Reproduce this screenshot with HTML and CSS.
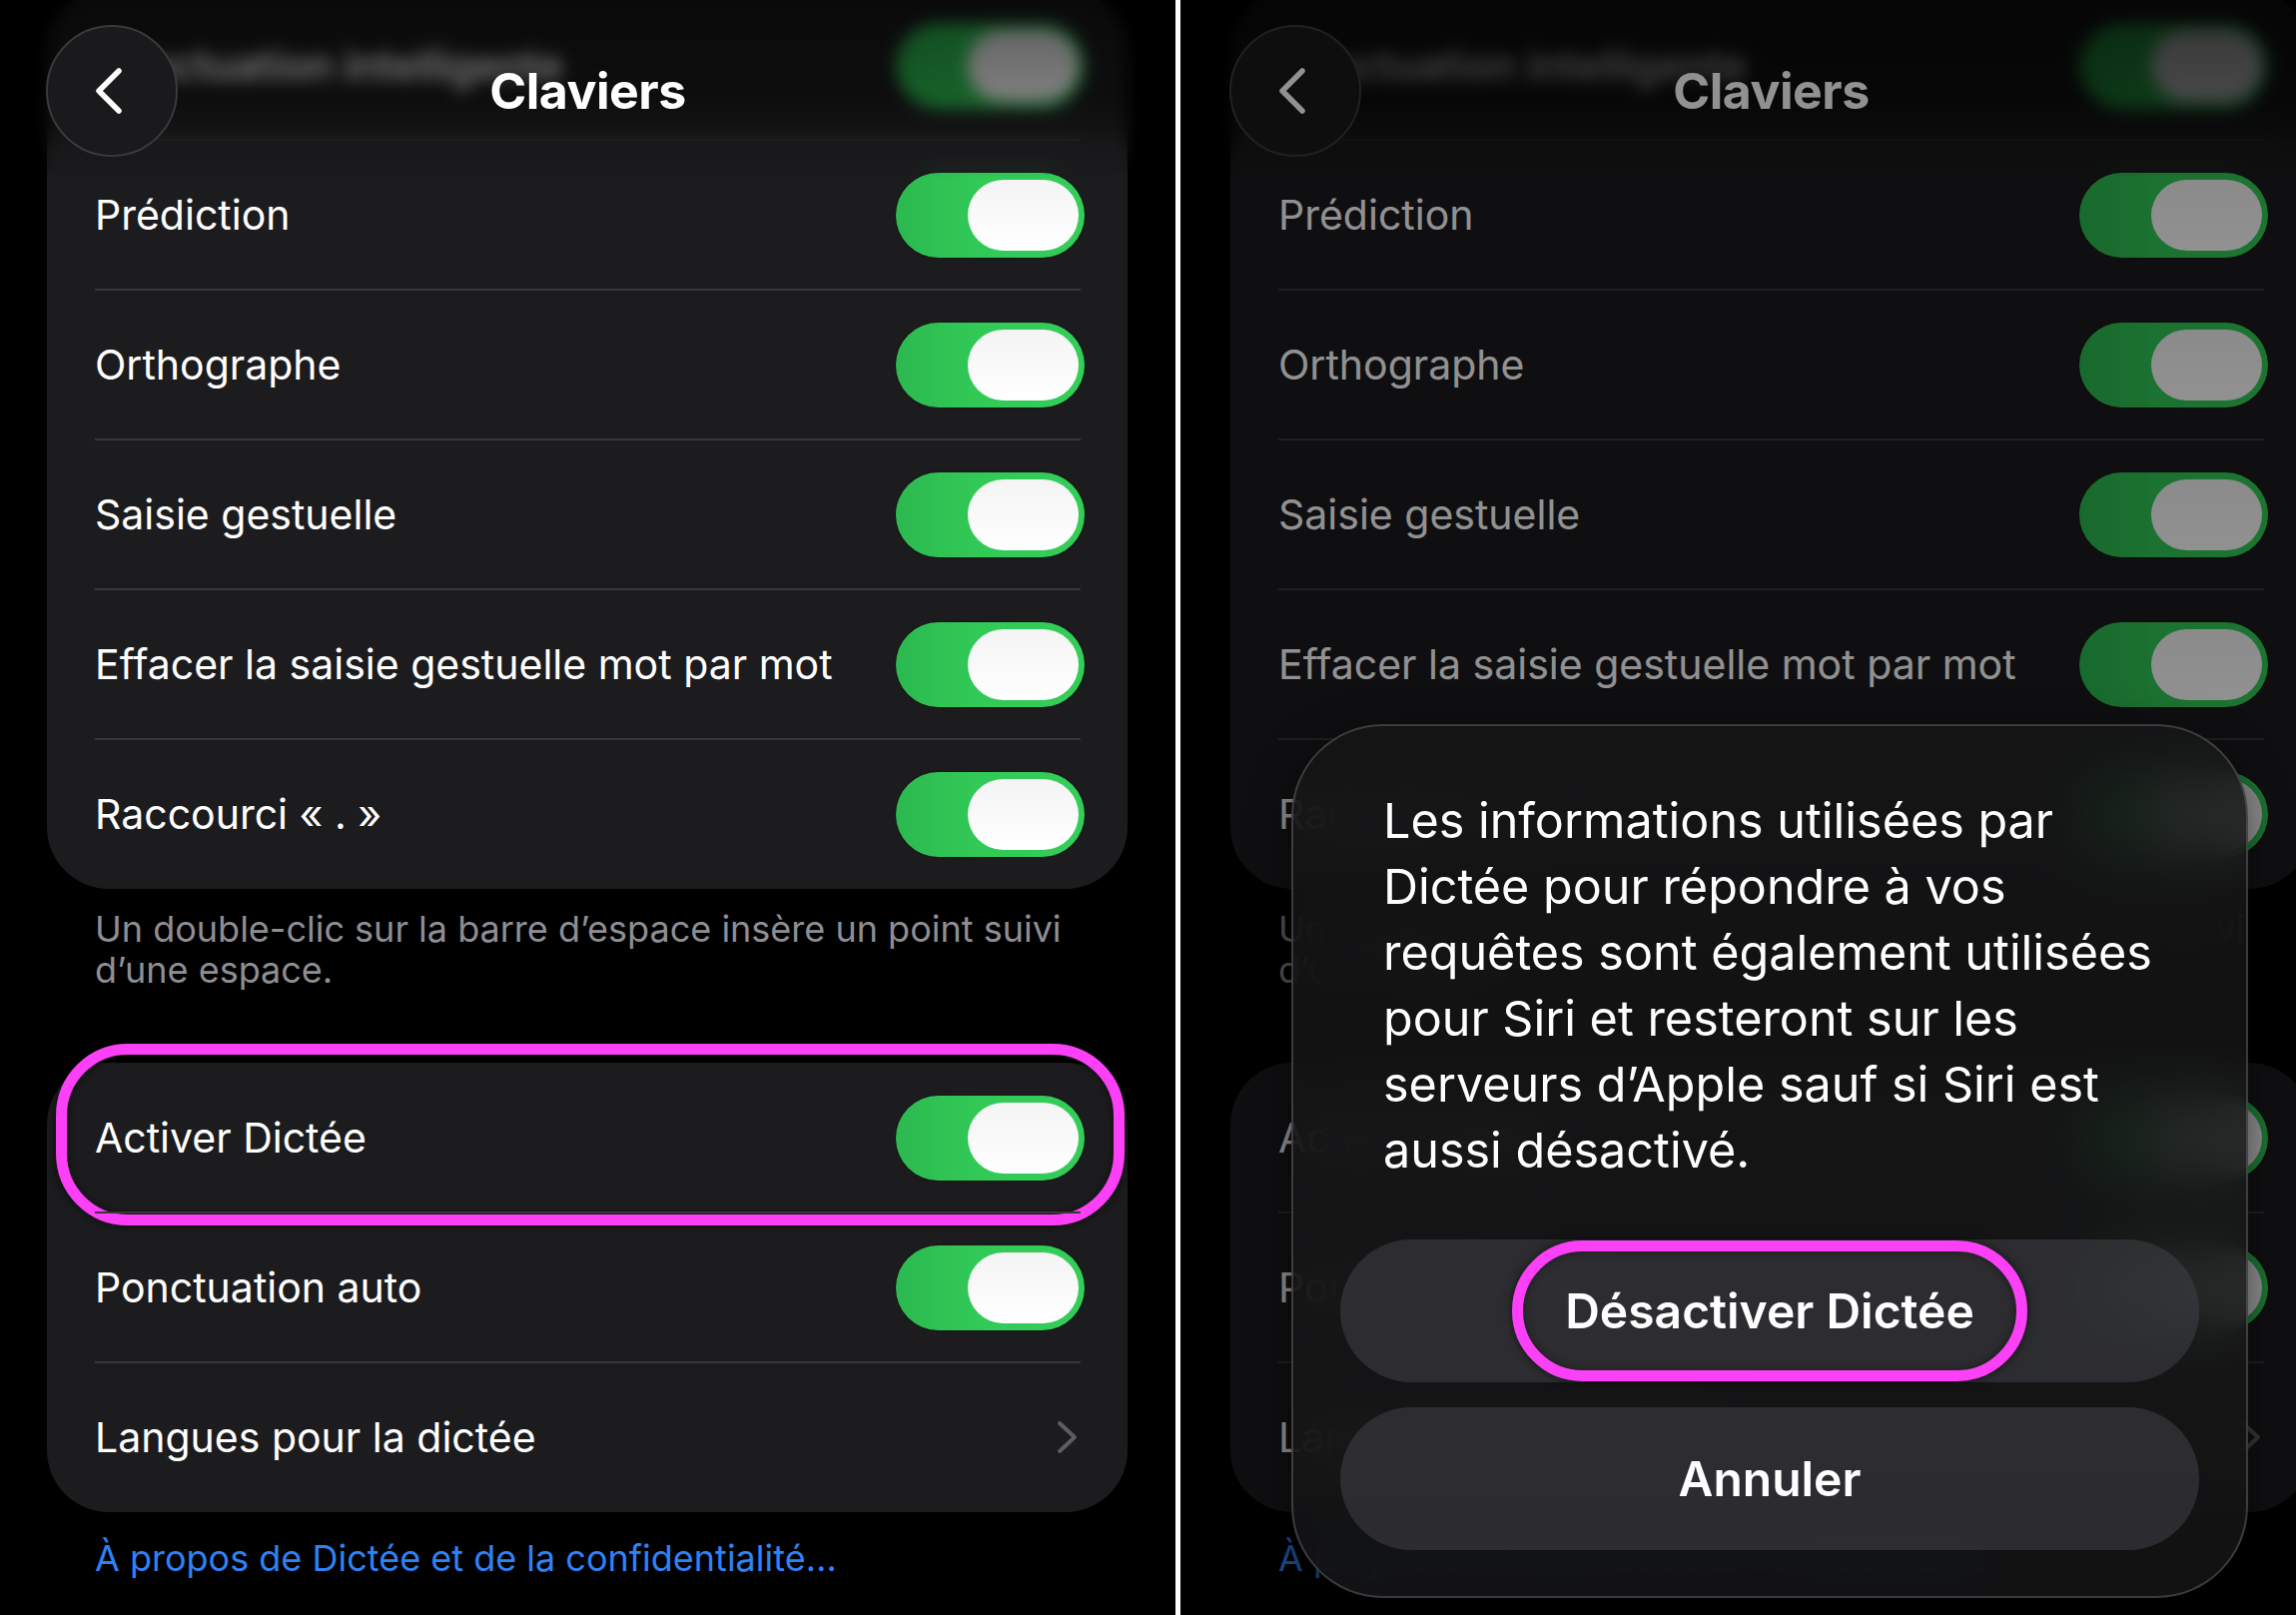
FILE: index.html
```html
<!DOCTYPE html>
<html lang="fr">
<head>
<meta charset="utf-8">
<title>Claviers – Dictée</title>
<link rel="stylesheet" href="styles.css">
</head>
<body>
<div class="stage">
  <section class="panel panel-left">
    <div class="screen">
      <div class="content">
        <div class="group group-top">
          <div class="row ghost"><span class="label">Ponctuation intelligente</span><span class="switch"><span class="knob"></span></span></div>
          <div class="row"><span class="label">Prédiction</span><span class="switch"><span class="knob"></span></span></div>
          <div class="row"><span class="label">Orthographe</span><span class="switch"><span class="knob"></span></span></div>
          <div class="row"><span class="label">Saisie gestuelle</span><span class="switch"><span class="knob"></span></span></div>
          <div class="row"><span class="label">Effacer la saisie gestuelle mot par mot</span><span class="switch"><span class="knob"></span></span></div>
          <div class="row"><span class="label">Raccourci « . »</span><span class="switch"><span class="knob"></span></span></div>
        </div>
        <p class="note">Un double-clic sur la barre d’espace insère un point suivi d’une espace.</p>
        <div class="group">
          <div class="row"><span class="label">Activer Dictée</span><span class="switch"><span class="knob"></span></span><span class="highlight"></span></div>
          <div class="row"><span class="label">Ponctuation auto</span><span class="switch"><span class="knob"></span></span></div>
          <div class="row"><span class="label">Langues pour la dictée</span><svg class="chevron" width="22" height="34" viewBox="0 0 22 34"><polyline points="3,3 18,17 3,31" fill="none" stroke="#5d5d62" stroke-width="4" stroke-linecap="round" stroke-linejoin="round"/></svg></div>
        </div>
        <a class="link" href="#">À propos de Dictée et de la confidentialité…</a>
      </div>
      <div class="edge"></div>
      <header class="nav">
        <span class="back"><svg width="30" height="48" viewBox="0 0 30 48"><polyline points="25,4 5,24 25,44" fill="none" stroke="#fff" stroke-width="5.5" stroke-linecap="round" stroke-linejoin="round"/></svg></span>
        <h1 class="title">Claviers</h1>
      </header>
    </div>
  </section>
  <div class="divider"></div>
  <section class="panel panel-right">
    <div class="screen screen-shift">
      <div class="content">
        <div class="group group-top">
          <div class="row ghost"><span class="label">Ponctuation intelligente</span><span class="switch"><span class="knob"></span></span></div>
          <div class="row"><span class="label">Prédiction</span><span class="switch"><span class="knob"></span></span></div>
          <div class="row"><span class="label">Orthographe</span><span class="switch"><span class="knob"></span></span></div>
          <div class="row"><span class="label">Saisie gestuelle</span><span class="switch"><span class="knob"></span></span></div>
          <div class="row"><span class="label">Effacer la saisie gestuelle mot par mot</span><span class="switch"><span class="knob"></span></span></div>
          <div class="row"><span class="label">Raccourci « . »</span><span class="switch"><span class="knob"></span></span></div>
        </div>
        <p class="note">Un double-clic sur la barre d’espace insère un point suivi d’une espace.</p>
        <div class="group">
          <div class="row"><span class="label">Activer Dictée</span><span class="switch"><span class="knob"></span></span></div>
          <div class="row"><span class="label">Ponctuation auto</span><span class="switch"><span class="knob"></span></span></div>
          <div class="row"><span class="label">Langues pour la dictée</span><svg class="chevron" width="22" height="34" viewBox="0 0 22 34"><polyline points="3,3 18,17 3,31" fill="none" stroke="#5d5d62" stroke-width="4" stroke-linecap="round" stroke-linejoin="round"/></svg></div>
        </div>
        <a class="link" href="#">À propos de Dictée et de la confidentialité…</a>
      </div>
      <div class="edge"></div>
      <header class="nav">
        <span class="back"><svg width="30" height="48" viewBox="0 0 30 48"><polyline points="25,4 5,24 25,44" fill="none" stroke="#fff" stroke-width="5.5" stroke-linecap="round" stroke-linejoin="round"/></svg></span>
        <h1 class="title">Claviers</h1>
      </header>
    </div>
    <div class="dim"></div>
    <div class="alert">
      <p class="alert-text">Les informations utilisées par<br>Dictée pour répondre à vos<br>requêtes sont également utilisées<br>pour Siri et resteront sur les<br>serveurs d’Apple sauf si Siri est<br>aussi désactivé.</p>
      <div class="btn"><span class="btn-hl">Désactiver Dictée</span></div>
      <div class="btn">Annuler</div>
    </div>
  </section>
</div>
</body>
</html>
```
FILE: styles.css
```css
* { box-sizing: border-box; }
html, body {
  margin: 0;
  padding: 0;
  background: #000;
}
body {
  width: 2299px;
  height: 1617px;
  overflow: hidden;
  font-family: Inter, "Noto Sans", sans-serif;
  color: #fff;
}
.stage {
  display: flex;
  width: 2299px;
  height: 1617px;
}
.panel {
  position: relative;
  height: 1617px;
  overflow: hidden;
  background: #000;
}
.panel-left { width: 1177px; flex: 0 0 1177px; }
.panel-right { width: 1117px; flex: 0 0 1117px; }
.divider { width: 5px; flex: 0 0 5px; background: #fff; }

.screen {
  position: relative;
  display: flow-root;
  width: 1177px;
  height: 1617px;
}
.screen-shift { margin-left: 3px; }

.content {
  padding: 0 48px 0 47px;
  margin-top: -10px;
}
.group {
  background: #1c1c1e;
  border-radius: 62px;
}
.row {
  position: relative;
  display: flex;
  align-items: center;
  justify-content: space-between;
  height: 150px;
  padding: 0 43px 0 48px;
  font-size: 41px;
}
.ghost { font-weight: 600; }
.row + .row::before {
  content: "";
  position: absolute;
  top: -1px;
  left: 48px;
  right: 47px;
  height: 2px;
  background: #38383a;
}
.switch {
  display: flex;
  justify-content: flex-end;
  align-items: center;
  width: 189px;
  height: 85px;
  padding: 0 6px;
  border-radius: 43px;
  background: linear-gradient(90deg, #2cb950 0%, #32ca57 45%, #33cd58 100%);
  box-shadow: 0 0 2px rgba(0,0,0,0.6);
}
.knob {
  width: 111px;
  height: 71px;
  border-radius: 36px;
  background: linear-gradient(180deg, #f4f4f4, #ffffff);
}
.chevron { margin-right: 6px; }

.note {
  margin: 20px 0 72px;
  padding: 0 30px 0 48px;
  font-size: 36px;
  line-height: 41px;
  color: #8e8e93;
}
.link {
  display: block;
  margin-top: 26px;
  padding-left: 48px;
  font-size: 36px;
  line-height: 41px;
  color: #2f82f6;
  text-decoration: none;
}

.highlight {
  position: absolute;
  top: -19px;
  left: 9px;
  right: 3px;
  bottom: -13px;
  border: 11px solid #fb40f8;
  border-radius: 72px;
  box-shadow: 0 0 10px rgba(0,0,0,0.7), inset 0 0 8px rgba(0,0,0,0.5);
  pointer-events: none;
}

.edge {
  position: absolute;
  top: 0;
  left: 0;
  right: 0;
  height: 178px;
  backdrop-filter: blur(8px);
  -webkit-backdrop-filter: blur(8px);
  background: linear-gradient(180deg, rgba(0,0,0,0.62) 0%, rgba(0,0,0,0.5) 55%, rgba(0,0,0,0) 100%);
  -webkit-mask-image: linear-gradient(180deg, #000 70%, transparent 100%);
  mask-image: linear-gradient(180deg, #000 70%, transparent 100%);
}
.nav {
  position: absolute;
  top: 25px;
  left: 46px;
  right: 46px;
  height: 132px;
  display: flex;
  align-items: center;
  justify-content: center;
}
.back {
  position: absolute;
  left: 0;
  top: 0;
  width: 132px;
  height: 132px;
  border-radius: 50%;
  background: #1a1a1c;
  border: 2px solid #3a3a3c;
  display: flex;
  align-items: center;
  justify-content: center;
  padding-right: 6px;
}
.title {
  margin: 0;
  font-size: 50px;
  font-weight: 700;
  letter-spacing: -0.5px;
}

.dim {
  position: absolute;
  inset: 0;
  background: rgba(0,0,0,0.43);
}
.alert {
  position: absolute;
  left: 111px;
  top: 725px;
  width: 958px;
  padding: 62px 47px 46px;
  border-radius: 92px;
  background: rgba(21,21,23,0.84);
  backdrop-filter: blur(28px);
  -webkit-backdrop-filter: blur(28px);
  border: 2px solid rgba(110,110,114,0.45);
  box-shadow: 0 10px 40px rgba(0,0,0,0.5);
}
.alert-text {
  margin: 0 0 56px;
  padding-left: 43px;
  font-size: 48.5px;
  line-height: 66px;
}
.btn {
  display: flex;
  align-items: center;
  justify-content: center;
  height: 143px;
  border-radius: 72px;
  background: rgba(62,62,66,0.62);
  font-size: 48px;
  font-weight: 600;
}
.btn + .btn { margin-top: 25px; }
.btn-hl {
  display: flex;
  align-items: center;
  justify-content: center;
  height: 141px;
  padding: 0 42px;
  border: 11px solid #fb40f8;
  border-radius: 72px;
  box-shadow: 0 0 10px rgba(0,0,0,0.6), inset 0 0 8px rgba(0,0,0,0.4);
}
```
